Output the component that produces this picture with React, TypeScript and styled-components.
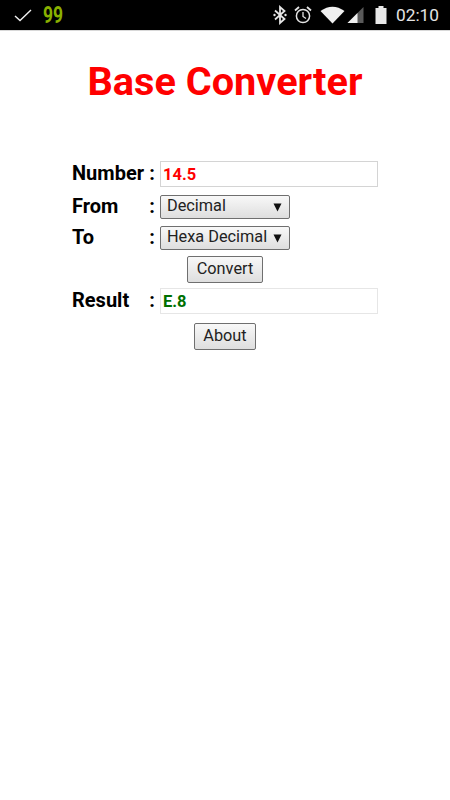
import React, {FC} from "react";
import styled, {createGlobalStyle} from "styled-components";

const GlobalStyle = createGlobalStyle`
  html, body {
    margin: 0;
    padding: 0;
    background: #ffffff;
    font-family: Roboto, "Liberation Sans", sans-serif;
  }
`

const Page = styled.div`
  width: 450px;
  height: 800px;
  overflow: hidden;
  background: #ffffff;
`

const StatusBar = styled.div`
  display: flex;
  align-items: center;
  height: 30px;
  padding: 0 11px 0 14px;
  background: #000000;
  border-bottom: 1px solid #d8d8d8;
`

const Counter = styled.span`
  margin-left: 11px;
  font-size: 23px;
  font-weight: 700;
  color: #8ab000;
  font-family: "Roboto", sans-serif;
  transform: scaleX(0.76);
  transform-origin: left center;
`

const StatusRight = styled.div`
  display: flex;
  align-items: center;
  margin-left: auto;
`

const Clock = styled.span`
  margin-left: 9px;
  font-size: 17.3px;
  color: #e4e4e4;
`

const StatusIcon = styled.svg<{$gap?: number}>`
  display: block;
  margin-left: ${p => p.$gap ?? 0}px;
`

const Title = styled.h1`
  margin: 30px 0 0;
  height: 42px;
  line-height: 42px;
  text-align: center;
  font-size: 39.7px;
  font-weight: 700;
  color: #ff0000;
`

const Form = styled.div`
  margin-top: 58px;
  display: flex;
  flex-direction: column;
`

const Row = styled.div<{$top: number}>`
  display: grid;
  grid-template-columns: 76px 12px 1fr;
  align-items: center;
  margin-top: ${p => p.$top}px;
  padding-left: 72px;
`

const Label = styled.span`
  padding-bottom: 2px;
  line-height: 20px;
  font-size: 20px;
  font-weight: 700;
  color: #000000;
  white-space: nowrap;
`

const Colon = styled.span`
  padding-bottom: 2px;
  padding-right: 5px;
  grid-column: 2;
  line-height: 20px;
  font-size: 20px;
  font-weight: 700;
  color: #000000;
  text-align: right;
`

const ValueInput = styled.input<{$color: string; $border: string}>`
  box-sizing: border-box;
  width: 218px;
  height: 26px;
  padding: 0 2px;
  border: 1px solid ${p => p.$border};
  outline: none;
  background: #ffffff;
  font-family: inherit;
  font-size: 16.5px;
  font-weight: 700;
  color: ${p => p.$color};
`

const SelectWrap = styled.div`
  position: relative;
  width: 130px;
  height: 24px;
`

const Select = styled.select`
  appearance: none;
  box-sizing: border-box;
  display: block;
  width: 100%;
  height: 100%;
  padding: 0 0 3px 6px;
  border: 1px solid #6f6f6f;
  border-radius: 2px;
  background: linear-gradient(#f8f8f8, #dedede);
  font-family: inherit;
  font-size: 16.3px;
  color: #222222;
`

const Arrow = styled.svg`
  position: absolute;
  right: 8px;
  top: 8px;
  pointer-events: none;
`

const ButtonRow = styled.div<{$top: number}>`
  display: flex;
  justify-content: center;
  margin-top: ${p => p.$top}px;
`

const ActionButton = styled.button<{$width: number}>`
  box-sizing: border-box;
  width: ${p => p.$width}px;
  height: 27px;
  padding: 0 0 2px;
  border: 1px solid #6f6f6f;
  border-radius: 2px;
  background: linear-gradient(#f8f8f8, #dedede);
  font-family: inherit;
  font-size: 16.3px;
  color: #222222;
`

const Check = () => (
    <StatusIcon width="18" height="14" viewBox="0 0 18 14">
        <path d="M1 8 L6 12.5 L17 2" fill="none" stroke="#f0f0f0" strokeWidth="1.4"/>
    </StatusIcon>
)

const Bluetooth = () => (
    <StatusIcon width="16" height="20" viewBox="0 0 16 20">
        <path d="M3 5.5 L12.5 14 L8 18 V2 L12.5 6 L3 14.5" fill="none" stroke="#e4e4e4" strokeWidth="1.8"/>
        <circle cx="2.5" cy="10" r="1.2" fill="#e4e4e4"/>
        <circle cx="13.5" cy="10" r="1.2" fill="#e4e4e4"/>
    </StatusIcon>
)

const Alarm = () => (
    <StatusIcon $gap={6} width="18" height="20" viewBox="0 0 18 20">
        <circle cx="9" cy="11" r="6.6" fill="none" stroke="#e4e4e4" strokeWidth="1.5"/>
        <path d="M9 7 V11.5 L12 13.5" fill="none" stroke="#e4e4e4" strokeWidth="1.3"/>
        <path d="M1 5.5 L5 2 M17 5.5 L13 2" fill="none" stroke="#e4e4e4" strokeWidth="1.8"/>
    </StatusIcon>
)

const Wifi = () => (
    <StatusIcon $gap={8} width="25" height="18" viewBox="0 0 24 18">
        <path d="M0 5 Q12 -3.5 24 5 L12 17.5 Z" fill="#f0f0f0"/>
    </StatusIcon>
)

const Signal = () => (
    <StatusIcon $gap={2} width="18" height="18" viewBox="0 0 17 18">
        <path d="M0 17 L16 1 V17 Z" fill="#5a5a5a"/>
        <path d="M0 17 L10 7 V17 Z" fill="#f0f0f0"/>
    </StatusIcon>
)

const Battery = () => (
    <StatusIcon $gap={10} width="12" height="20" viewBox="0 0 12 20">
        <path d="M3.5 1 H8.5 V3 H11.5 V19 H0.5 V3 H3.5 Z" fill="#e8e8e8"/>
    </StatusIcon>
)

const DownArrow = () => (
    <Arrow width="9" height="9" viewBox="0 0 9 9">
        <path d="M0.5 0.5 H8.5 L4.5 8.5 Z" fill="#111111"/>
    </Arrow>
)

const App: FC = () => {
    return (
        <React.Fragment>
            <GlobalStyle/>
            <Page>
                <StatusBar>
                    <Check/>
                    <Counter>99</Counter>
                    <StatusRight>
                        <Bluetooth/>
                        <Alarm/>
                        <Wifi/>
                        <Signal/>
                        <Battery/>
                        <Clock>02:10</Clock>
                    </StatusRight>
                </StatusBar>

                <Title>Base Converter</Title>

                <Form>
                    <Row $top={0}>
                        <Label>Number</Label>
                        <Colon>:</Colon>
                        <ValueInput $color="#ff0000" $border="#d4d4d4" value="14.5" readOnly/>
                    </Row>
                    <Row $top={8}>
                        <Label>From</Label>
                        <Colon>:</Colon>
                        <SelectWrap>
                            <Select defaultValue="Decimal">
                                <option>Decimal</option>
                                <option>Binary</option>
                                <option>Octal</option>
                                <option>Hexa Decimal</option>
                            </Select>
                            <DownArrow/>
                        </SelectWrap>
                    </Row>
                    <Row $top={7}>
                        <Label>To</Label>
                        <Colon>:</Colon>
                        <SelectWrap>
                            <Select defaultValue="Hexa Decimal">
                                <option>Decimal</option>
                                <option>Binary</option>
                                <option>Octal</option>
                                <option>Hexa Decimal</option>
                            </Select>
                            <DownArrow/>
                        </SelectWrap>
                    </Row>
                    <ButtonRow $top={6}>
                        <ActionButton $width={76}>Convert</ActionButton>
                    </ButtonRow>
                    <Row $top={5}>
                        <Label>Result</Label>
                        <Colon>:</Colon>
                        <ValueInput $color="#007000" $border="#e6e6e6" value="E.8" readOnly/>
                    </Row>
                    <ButtonRow $top={9}>
                        <ActionButton $width={62}>About</ActionButton>
                    </ButtonRow>
                </Form>
            </Page>
        </React.Fragment>
    )
}

export default App;
